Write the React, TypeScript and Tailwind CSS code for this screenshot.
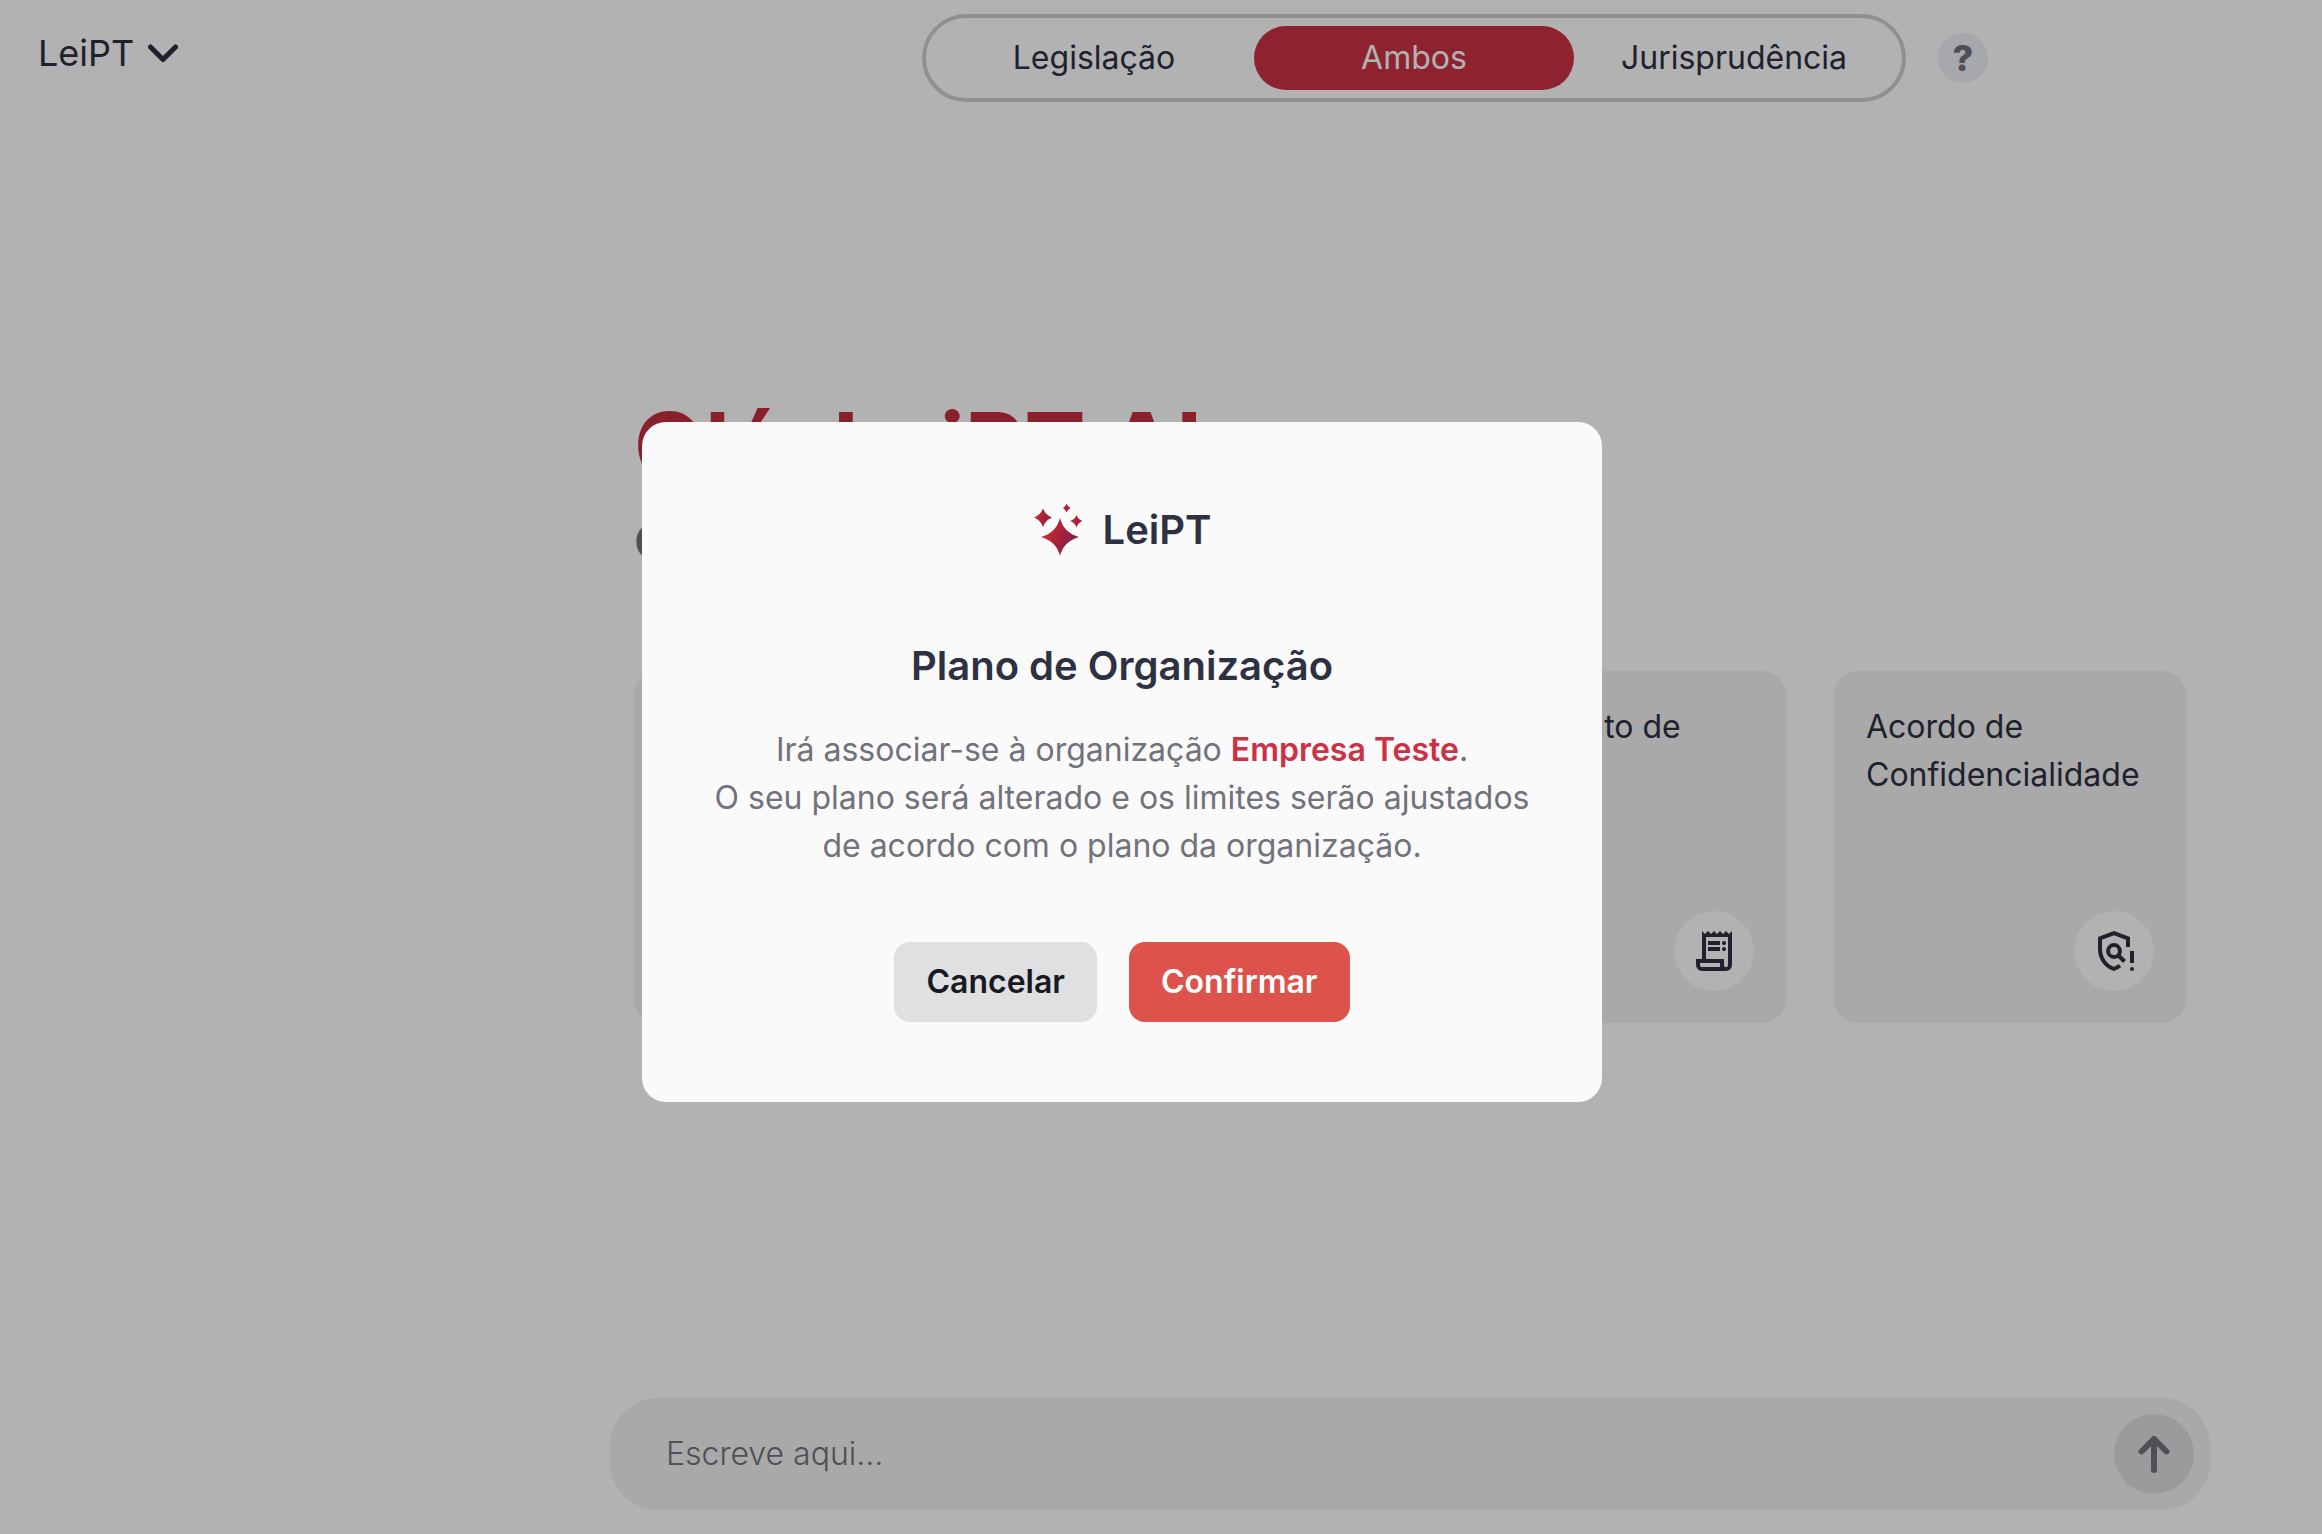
import React from "react";

const cards = [
  { title: "Contrato de Arrendamento", icon: "receipt" },
  { title: "Minuta de Procuração", icon: "receipt" },
  { title: "Orçamento de Serviços", icon: "receipt" },
  { title: "Acordo de Confidencialidade", icon: "policy" },
];

function ReceiptIcon() {
  return (
    <svg viewBox="0 -960 960 960" className="size-12" fill="currentColor" aria-hidden="true">
      <path d="M240-80q-50 0-85-35t-35-85v-120h120v-560l60 60 60-60 60 60 60-60 60 60 60-60 60 60 60-60 60 60 60-60v680q0 50-35 85t-85 35H240Zm480-80q17 0 28.500-11.500T760-200v-560H320v440h360v120q0 17 11.500 28.500T720-160ZM360-600v-80h240v80H360Zm0 120v-80h240v80H360Zm320-120q-17 0-28.500-11.500T640-640q0-17 11.500-28.500T680-680q17 0 28.500 11.500T720-640q0 17-11.500 28.500T680-600Zm0 120q-17 0-28.500-11.500T640-520q0-17 11.500-28.500T680-560q17 0 28.500 11.500T720-520q0 17-11.500 28.500T680-480ZM240-160h360v-80H200v40q0 17 11.500 28.500T240-160Z" />
    </svg>
  );
}

function PolicyAlertIcon() {
  return (
    <svg viewBox="0 0 960 960" className="size-12" fill="none" stroke="currentColor" strokeWidth="80" aria-hidden="true">
      <path d="M760 400V228L480 123 200 228v216c0 184 120 344 280 394 44-14 84-38 118-68" />
      <circle cx="480" cy="480" r="118" />
      <path d="m560 560 130 130" />
      <path d="M840 480v240" />
      <circle cx="840" cy="840" r="40" fill="currentColor" stroke="none" />
    </svg>
  );
}

function LogoIcon() {
  return (
    <svg viewBox="0 0 50 54" className="h-[54px] w-[50px]" aria-hidden="true">
      <defs>
        <linearGradient id="spark-main" gradientUnits="userSpaceOnUse" x1="12" y1="26" x2="44" y2="42">
          <stop offset="0.1" stopColor="#c5282d" />
          <stop offset="1" stopColor="#7a1a4e" />
        </linearGradient>
        <linearGradient id="spark-small" x1="0" y1="0.300" x2="1" y2="0.700">
          <stop offset="0.1" stopColor="#c5282d" />
          <stop offset="1" stopColor="#8c1a48" />
        </linearGradient>
      </defs>
      <path fill="url(#spark-main)" d="M27 15Q30.500 29.500 46 34Q30.500 38.500 27 53Q23.500 38.500 8 34Q23.500 29.500 27 15Z" />
      <g fill="url(#spark-small)">
        <path d="M10 5.500Q12.500 12 19 14.500Q12.500 17 10 24Q7.500 17 1 14.500Q7.500 12 10 5.500Z" />
        <path d="M43.500 12Q45 16.500 49.500 18Q45 19.500 43.500 24.500Q42 19.500 37 18Q42 16.500 43.500 12Z" />
        <path d="M33.500 0.500Q34.500 3.500 37.500 5Q34.500 6.500 33.500 9.500Q32.500 6.500 30 5Q32.500 3.500 33.500 0.500Z" />
      </g>
    </svg>
  );
}

export default function App() {
  return (
    <div className="relative flex min-h-screen flex-col bg-white font-['Inter',sans-serif] text-[32px] leading-[48px] text-[#2d3142]">
      <header className="grid h-[116px] grid-cols-[498px_1fr] items-center">
        <button className="mb-2.5 flex items-center gap-3.5 pl-[38px] text-[36px]">
          LeiPT
          <svg viewBox="0 0 30 20" className="h-5 w-[30px]" fill="none" stroke="currentColor" strokeWidth="5" strokeLinecap="round" strokeLinejoin="round" aria-hidden="true">
            <path d="M2.500 4 15 16.500 27.500 4" />
          </svg>
        </button>
        <div className="flex items-center justify-center gap-8">
          <div className="ml-[90px] flex rounded-full border-4 border-[#cccfd2] p-2">
            <button className="h-16 w-80 rounded-full">Legislação</button>
            <button className="h-16 w-80 rounded-full bg-[#cc3144] text-white">Ambos</button>
            <button className="h-16 w-80 rounded-full">Jurisprudência</button>
          </div>
          <button className="size-[50px] rounded-full bg-[#f0f1f9] text-[36px] font-extrabold text-[#71727a]" aria-label="Ajuda">
            ?
          </button>
        </div>
      </header>

      <main className="ml-[498px] flex flex-1 flex-col items-center">
        <div className="w-full max-w-[1552px] pt-[272px]">
          <h1 className="text-[92px] leading-[116px] font-bold text-[#c52e3f]">Olá, LeiPT AI</h1>
          <p className="mt-0.5 text-[48px] leading-[72px] font-semibold text-[#71727a]">Como posso ajudar?</p>
          <div className="mt-[93px] grid grid-cols-4 gap-12">
            {cards.map((c) => (
              <button
                key={c.title}
                className="flex h-[352px] flex-col items-start justify-between rounded-3xl bg-[#f2f2f2] p-8 text-left"
              >
                {c.title}
                <span className="grid size-20 place-items-center self-end rounded-full bg-white">
                  {c.icon === "receipt" ? <ReceiptIcon /> : <PolicyAlertIcon />}
                </span>
              </button>
            ))}
          </div>
        </div>
        <form className="mt-auto mb-6 flex h-28 w-full max-w-[1600px] items-center rounded-[48px] bg-[#f2f2f2] pr-4 pl-14">
          <input
            aria-label="Mensagem"
            placeholder="Escreve aqui..."
            className="min-w-0 flex-1 bg-transparent font-light outline-none placeholder:text-[#71727a]"
          />
          <button type="button" aria-label="Enviar" className="grid size-20 place-items-center rounded-full bg-[#dfdfe2] text-[#71727a]">
            <svg viewBox="0 0 40 40" className="size-10" fill="none" stroke="currentColor" strokeWidth="6" strokeLinecap="round" strokeLinejoin="round" aria-hidden="true">
              <path d="M20 36V5M7.500 17.500 20 5l12.500 12.500" />
            </svg>
          </button>
        </form>
      </main>

      <div className="fixed inset-0 flex items-center justify-center bg-black/30 pr-[78px] pb-[10px]">
        <section
          role="dialog"
          aria-modal="true"
          aria-labelledby="plan-title"
          className="flex w-[960px] flex-col items-center rounded-3xl bg-[#fafafa] px-12 py-20 text-center"
        >
          <div className="flex items-center gap-5 text-[40px] leading-[56px] font-semibold">
            <LogoIcon />
            LeiPT
          </div>
          <h2 id="plan-title" className="mt-20 text-[40px] leading-[56px] font-semibold">
            Plano de Organização
          </h2>
          <p className="mt-8 text-[#71727a]">
            Irá associar-se à organização <strong className="font-semibold text-[#cc3144]">Empresa Teste</strong>.
            <br />O seu plano será alterado e os limites serão ajustados
            <br />
            de acordo com o plano da organização.
          </p>
          <div className="mt-[72px] flex gap-8 font-semibold">
            <button className="h-20 rounded-2xl bg-[#dfe0e2] px-8 text-[#181a22]">Cancelar</button>
            <button className="h-20 rounded-2xl bg-[#de524c] px-8 text-white">Confirmar</button>
          </div>
        </section>
      </div>
    </div>
  );
}
